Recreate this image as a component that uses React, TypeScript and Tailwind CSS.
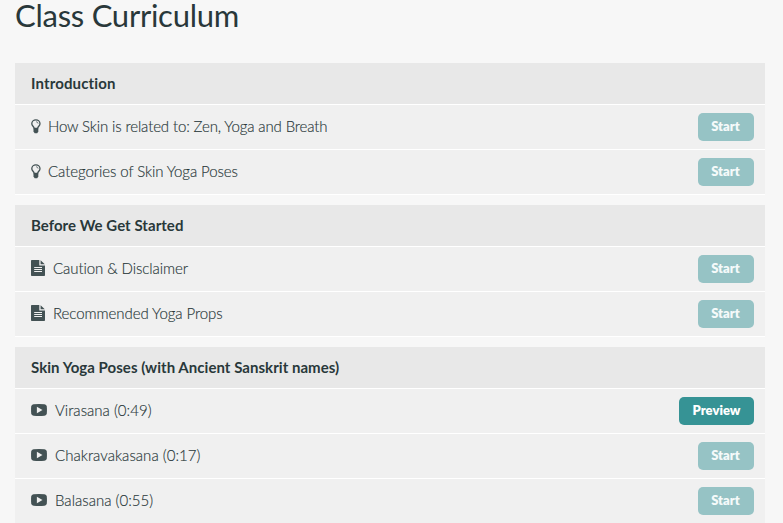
type Kind = 'idea' | 'text' | 'video';

type Lecture = { title: string; kind: Kind; tracking: string; preview?: boolean };

const sections: { title: string; tracking: string; lectures: Lecture[] }[] = [
  {
    title: 'Introduction',
    tracking: 'tracking-[0.14px]',
    lectures: [
      { title: 'How Skin is related to: Zen, Yoga and Breath', kind: 'idea', tracking: 'tracking-[-0.13px]' },
      { title: 'Categories of Skin Yoga Poses', kind: 'idea', tracking: 'tracking-[-0.08px]' },
    ],
  },
  {
    title: 'Before We Get Started',
    tracking: 'tracking-[0.04px]',
    lectures: [
      { title: 'Caution & Disclaimer', kind: 'text', tracking: 'tracking-[-0.08px]' },
      { title: 'Recommended Yoga Props', kind: 'text', tracking: 'tracking-[-0.06px]' },
    ],
  },
  {
    title: 'Skin Yoga Poses (with Ancient Sanskrit names)',
    tracking: 'tracking-[0.04px]',
    lectures: [
      { title: 'Virasana (0:49)', kind: 'video', tracking: 'tracking-[0.02px]', preview: true },
      { title: 'Chakravakasana (0:17)', kind: 'video', tracking: 'tracking-[0.03px]' },
      { title: 'Balasana (0:55)', kind: 'video', tracking: 'tracking-[0.02px]' },
    ],
  },
];

function LectureIcon({ kind }: { kind: Kind }) {
  if (kind === 'idea') {
    return (
      <svg viewBox="0 0 10 15" className="mr-[7px] mb-0.5 h-[15px] w-2.5 text-[#435254]">
        <path
          d="M3.200 9.500C3 7.500.8 6.900.8 4.700A4.100 3.900 0 0 1 9 4.700C9 6.900 6.800 7.500 6.600 9.500Z"
          fill="none"
          stroke="currentColor"
          strokeWidth="1.300"
        />
        <path d="M5 2.700Q6.900 2.800 7.100 4.600" fill="none" stroke="currentColor" strokeWidth=".7" />
        <path d="M2.500 9.300h4.800v3.200L6.200 14.200H3.700L2.500 12.500Z" fill="currentColor" />
      </svg>
    );
  }

  if (kind === 'text') {
    return (
      <svg viewBox="0 0 14 16" className="mr-2 mb-0.5 h-4 w-3.5 text-[#435254]">
        <path d="M.8 0H8.300V5.500H14V15.200Q14 16 13.200 16H.8Q0 16 0 15.200V.8Q0 0 .8 0ZM9.600.2 13.800 4.300H9.600Z" fill="currentColor" />
        <path d="M3.200 7.500H11M3.200 9.500H11M3.200 11.500H11" stroke="#f0f0f0" strokeWidth="1" />
      </svg>
    );
  }

  return (
    <svg viewBox="0 0 16 12" className="mr-2 mb-0.5 h-3 w-4 text-[#435254]">
      <path
        d="M2.500.3Q8-.1 13.500.3Q15.600.500 15.800 2.500Q16.100 6 15.800 9.500Q15.600 11.500 13.500 11.700Q8 12.100 2.500 11.700Q.4 11.500.2 9.500Q-.1 6 .2 2.500Q.4.500 2.500.3Z"
        fill="currentColor"
      />
      <path d="M5.900 2.700V9.300L11.500 6Z" fill="#f0f0f0" />
    </svg>
  );
}

export default function App() {
  return (
    <main className="h-[523px] overflow-hidden bg-[#f7f7f7] px-[15px] font-[Lato,sans-serif] text-[#29383a]">
      <h1 className="h-[63px] text-[31px] leading-[31px] tracking-[-0.26px]">Class Curriculum</h1>
      <div className="flex w-[750px] flex-col gap-2.5">
        {sections.map((section) => (
          <section key={section.title}>
            <h2
              className={`flex h-[42px] items-center border-b border-white bg-[#e8e8e8] px-4 text-[15px] font-bold ${section.tracking}`}
            >
              {section.title}
            </h2>
            {section.lectures.map((lecture) => (
              <div
                key={lecture.title}
                className="flex h-[45px] items-center border-b border-white bg-[#f0f0f0] pr-[11px] pl-4"
              >
                <LectureIcon kind={lecture.kind} />
                <span className={`pb-0.5 text-[15px] font-light [-webkit-text-stroke:0.15px] ${lecture.tracking}`}>
                  {lecture.title}
                </span>
                <button
                  className={`ml-auto h-7 rounded-[5px] text-[13px] font-extrabold ${
                    lecture.preview ? 'w-[75px] bg-[#369395] text-white' : 'w-14 bg-[#96c3c5] pr-px text-[#f5fafa]'
                  }`}
                >
                  {lecture.preview ? 'Preview' : 'Start'}
                </button>
              </div>
            ))}
          </section>
        ))}
      </div>
    </main>
  );
}
